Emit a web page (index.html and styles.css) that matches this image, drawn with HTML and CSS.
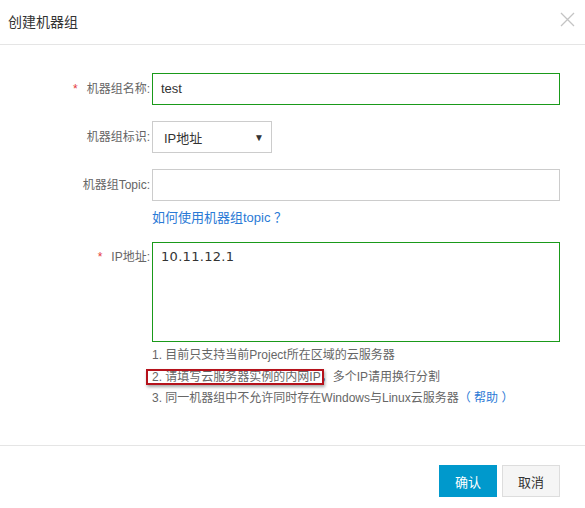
FILE: index.html
```html
<!DOCTYPE html>
<html lang="zh">
<head>
<meta charset="utf-8">
<link rel="stylesheet" href="styles.css">
</head>
<body>
<div class="dialog">
  <div class="header">
    <span class="title">创建机器组</span>
    <svg class="close" width="15" height="15" viewBox="0 0 15 15"><path d="M1 1L14 14M14 1L1 14" stroke="#c4c4c4" stroke-width="1.3" fill="none"/></svg>
  </div>
  <div class="body">
    <div class="row">
      <div class="label"><span class="req">*</span>机器组名称:</div>
      <div class="field"><div class="input ok">test</div></div>
    </div>
    <div class="row">
      <div class="label">机器组标识:</div>
      <div class="field"><div class="select"><span>IP地址</span><span class="arrow">▼</span></div></div>
    </div>
    <div class="row">
      <div class="label">机器组Topic:</div>
      <div class="field"><div class="input"></div></div>
    </div>
    <div class="linkrow"><a class="link">如何使用机器组topic ？</a></div>
    <div class="row row-ip">
      <div class="label lab-ip"><span class="req">*</span>IP地址:</div>
      <div class="field"><div class="textarea ok">10.11.12.1</div></div>
    </div>
    <div class="hints">
      <div>1. 目前只支持当前Project所在区域的云服务器</div>
      <div><span class="hl">2. 请填写云服务器实例的内网IP</span>，多个IP请用换行分割</div>
      <div>3. 同一机器组中不允许同时存在Windows与Linux云服务器<span class="link help">（ 帮助 ）</span></div>
    </div>
  </div>
  <div class="footer">
    <button class="btn primary">确认</button>
    <button class="btn">取消</button>
  </div>
</div>
</body>
</html>
```
FILE: styles.css
```css
html, body { margin: 0; padding: 0; background: #fff; }
body {
  font-family: "Liberation Sans", "Noto Sans CJK SC", sans-serif;
  font-size: 12px;
  color: #666;
  width: 585px;
  height: 508px;
  overflow: hidden;
}
.header {
  height: 44px;
  border-bottom: 1px solid #e5e5e5;
  display: flex;
  align-items: center;
  justify-content: space-between;
  padding: 0 10px 0 8px;
}
.title { font-size: 14px; color: #333; margin-top: -3px; }
.close { margin-top: -6px; }
.body { padding: 28px 25px 0 0; height: 400px; box-sizing: border-box; }
.row { display: flex; align-items: flex-start; margin-bottom: 16px; }
.row-ip { margin-bottom: 0; }
.label {
  width: 152px;
  flex: none;
  text-align: right;
  padding-right: 2px;
  line-height: 32px;
  box-sizing: border-box;
  color: #666;
}
.lab-ip { line-height: 30px; }
.req { color: #e4393c; margin-right: 9px; }
.field { flex: 1; }
.input {
  height: 32px;
  box-sizing: border-box;
  border: 1px solid #ccc;
  padding: 0 8px;
  line-height: 30px;
  color: #333;
  font-size: 13px;
}
.ok { border-color: #1a9a1a; }
.select {
  width: 120px;
  height: 32px;
  box-sizing: border-box;
  border: 1px solid #ccc;
  display: flex;
  justify-content: space-between;
  align-items: center;
  padding: 0 7px 0 11px;
  color: #333;
  font-size: 13px;
}
.arrow { font-size: 10px; color: #333; }
.linkrow { margin: -8px 0 15px 152px; line-height: 18px; }
.link { color: #2a7ad6; font-size: 13px; }
.help { font-size: 12px; }
.textarea {
  height: 100px;
  box-sizing: border-box;
  border: 1px solid #1a9a1a;
  padding: 6px 8px;
  color: #333;
  font-size: 13px;
  font-family: "DejaVu Sans", "Noto Sans CJK SC", sans-serif;
  letter-spacing: 0.3px;
}
.hints { margin: 3px 0 0 152px; line-height: 21.7px; font-size: 12px; color: #666; }
.hl { position: relative; }
.hl::after {
  content: "";
  position: absolute;
  left: -6px;
  right: -3px;
  top: -1px;
  bottom: -1px;
  border: 2px solid #b5121b;
  box-shadow: 1px 2px 3px rgba(0,0,0,0.35);
}
.footer {
  border-top: 1px solid #e5e5e5;
  height: 63px;
  box-sizing: border-box;
  display: flex;
  justify-content: flex-end;
  align-items: flex-start;
  padding: 19px 25px 0 0;
  gap: 5px;
}
.btn {
  width: 58px;
  height: 32px;
  border: 1px solid #ddd;
  background: #f5f5f5;
  color: #333;
  font-family: "Liberation Sans", "Noto Sans CJK SC", sans-serif;
  font-size: 13px;
  padding: 0;
}
.btn.primary { background: #0099cc; border-color: #0099cc; color: #fff; }
```
